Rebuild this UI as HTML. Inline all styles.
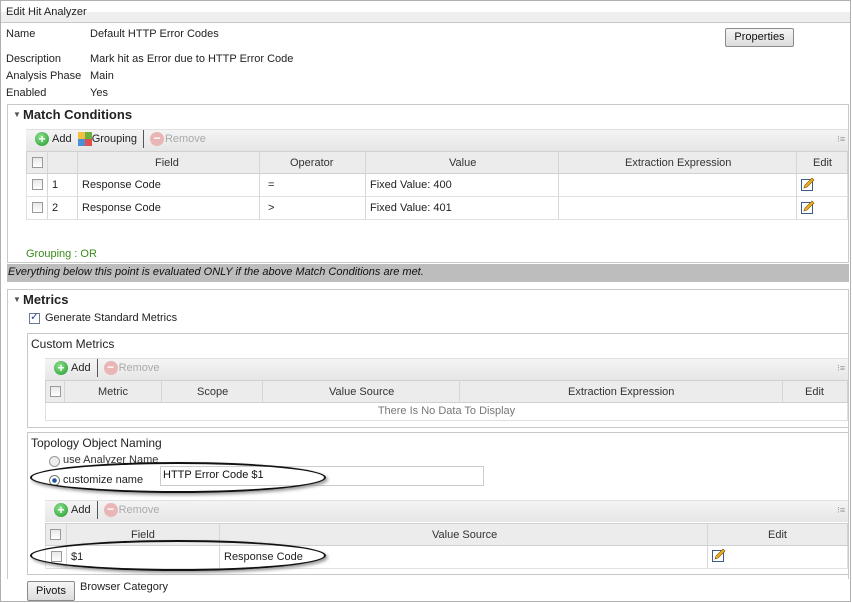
<!DOCTYPE html>
<html><head><meta charset="utf-8"><style>
*{box-sizing:border-box;margin:0;padding:0}
body{width:852px;height:603px;background:#fff;font-family:"Liberation Sans","DejaVu Sans",sans-serif;font-size:11px;color:#222;position:relative;overflow:hidden}
.a{position:absolute;white-space:nowrap}
.box{position:absolute;border:1px solid #c8c8c8;background:#fff}
.tb{position:absolute;background:linear-gradient(#f4f4f4,#e6e6e6);border-top:1px solid #e0e0e0}
.hd{position:absolute;background:#ececec;border:1px solid #d0d0d0;color:#333;text-align:center;line-height:21px}
.cell{position:absolute;border-left:1px solid #d6d6d6;height:100%;top:0}
.cb{position:absolute;width:11px;height:11px;border:1px solid #9a9a9a;background:linear-gradient(#e8e8e8,#fff)}
.tbi{display:flex;align-items:center;height:16px}
.plus{display:inline-block;width:14px;height:14px;border-radius:50%;background:radial-gradient(circle at 40% 35%,#8ee08e,#1f9a2a);color:#fff;font-size:12px;line-height:14px;text-align:center;font-weight:bold;margin-right:3px}
.minus{display:inline-block;width:14px;height:14px;border-radius:50%;background:#e9b5b5;color:#fff;font-size:12px;line-height:13px;text-align:center;font-weight:bold;margin-right:1px}
.btn{position:absolute;border:1px solid #8a8a8a;border-radius:2px;background:linear-gradient(#f6f6f6,#dcdcdc);text-align:center;color:#111}
.sep{display:inline-block;width:1px;height:18px;background:#555;margin:0 6px}
.row{position:absolute;background:#fff;border:1px solid #e0e0e0;border-top:none}
.pen{position:absolute;width:14px;height:14px}
</style></head><body>
<div class="a" style="left:0;top:0;width:851px;height:602px;border:1px solid #b0b0b0"></div>
<div class="a" style="left:1px;top:1px;width:849px;height:22px;background:linear-gradient(#fff 50%,#eeeeee 55%);border-bottom:1px solid #c8c8c8"></div>
<div class="a" style="left:6px;top:6px">Edit Hit Analyzer</div>
<div class="a" style="left:6px;top:28px">Name</div><div class="a" style="left:90px;top:28px">Default HTTP Error Codes</div>
<div class="a" style="left:6px;top:53px">Description</div><div class="a" style="left:90px;top:53px">Mark hit as Error due to HTTP Error Code</div>
<div class="a" style="left:6px;top:70px">Analysis Phase</div><div class="a" style="left:90px;top:70px">Main</div>
<div class="a" style="left:6px;top:87px">Enabled</div><div class="a" style="left:90px;top:87px">Yes</div>
<div class="btn" style="left:725px;top:28px;width:69px;height:19px;line-height:17px">Properties</div>

<div class="box" style="left:7px;top:104px;width:842px;height:159px"></div>
<div class="a" style="left:13px;top:110px;font-size:8px;color:#555">▼</div>
<div class="a" style="left:23px;top:107px;font-size:13px;font-weight:bold;color:#222">Match Conditions</div>
<div class="tb" style="left:26px;top:129px;width:822px;height:22px"></div>
<div class="a tbi" style="left:35px;top:131px"><span class="plus">+</span>Add&nbsp;&nbsp;<span style="display:inline-block;width:14px;height:14px;background:linear-gradient(90deg,#f0c040 50%,#6cb040 50%) top/100% 50% no-repeat,linear-gradient(90deg,#4a90d8 50%,#e05050 50%) bottom/100% 50% no-repeat"></span>Grouping<span class="sep"></span><span class="minus">−</span><span style="color:#aaa">Remove</span></div>
<div class="a" style="left:837px;top:134px;color:#999;font-size:9px">⁝≡</div>
<div class="hd" style="left:26px;top:151px;width:822px;height:23px">
<div class="cell" style="left:20px"></div><div class="cell" style="left:50px"></div><div class="cell" style="left:232px"></div><div class="cell" style="left:338px"></div><div class="cell" style="left:531px"></div><div class="cell" style="left:769px"></div>
<span class="a" style="left:128px;top:1px">Field</span><span class="a" style="left:263px;top:1px">Operator</span><span class="a" style="left:422px;top:1px">Value</span><span class="a" style="left:598px;top:1px">Extraction Expression</span><span class="a" style="left:786px;top:1px">Edit</span>
</div>
<div class="cb" style="left:32px;top:157px"></div>
<div class="row" style="left:26px;top:174px;width:822px;height:23px;line-height:22px">
<div class="cell" style="left:20px"></div><div class="cell" style="left:50px"></div><div class="cell" style="left:232px"></div><div class="cell" style="left:338px"></div><div class="cell" style="left:531px"></div><div class="cell" style="left:769px"></div>
<span class="a" style="left:25px">1</span><span class="a" style="left:55px">Response Code</span><span class="a" style="left:241px">=</span><span class="a" style="left:343px">Fixed Value: 400</span></div>
<div class="cb" style="left:32px;top:179px"></div>
<div class="row" style="left:26px;top:197px;width:822px;height:23px;line-height:22px">
<div class="cell" style="left:20px"></div><div class="cell" style="left:50px"></div><div class="cell" style="left:232px"></div><div class="cell" style="left:338px"></div><div class="cell" style="left:531px"></div><div class="cell" style="left:769px"></div>
<span class="a" style="left:25px">2</span><span class="a" style="left:55px">Response Code</span><span class="a" style="left:241px">&gt;</span><span class="a" style="left:343px">Fixed Value: 401</span></div>
<div class="cb" style="left:32px;top:202px"></div>
<svg class="pen" style="left:801px;top:177px" viewBox="0 0 14 14"><rect x="0.5" y="2.5" width="11" height="11" fill="#fff" stroke="#3a5a8a"/><path d="M3 11 L4 8 L11 1 L13 3 L6 10 Z" fill="#f0b020" stroke="#7a5000" stroke-width=".6"/></svg>
<svg class="pen" style="left:801px;top:200px" viewBox="0 0 14 14"><rect x="0.5" y="2.5" width="11" height="11" fill="#fff" stroke="#3a5a8a"/><path d="M3 11 L4 8 L11 1 L13 3 L6 10 Z" fill="#f0b020" stroke="#7a5000" stroke-width=".6"/></svg>
<div class="a" style="left:26px;top:248px;color:#3a8a1a">Grouping : OR</div>

<div class="a" style="left:7px;top:264px;width:842px;height:18px;background:#bdbdbd"></div>
<div class="a" style="left:8px;top:266px;font-style:italic;color:#111">Everything below this point is evaluated ONLY if the above Match Conditions are met.</div>

<div class="box" style="left:7px;top:289px;width:842px;height:290px;border-bottom:none"></div>
<div class="a" style="left:13px;top:295px;font-size:8px;color:#555">▼</div>
<div class="a" style="left:23px;top:292px;font-size:13px;font-weight:bold">Metrics</div>
<div class="cb" style="left:29px;top:313px;background:#fff;border-color:#6a7a9a"></div>
<div class="a" style="left:30px;top:310px;color:#2a4a9a;font-size:11px;font-weight:bold">✓</div>
<div class="a" style="left:45px;top:312px">Generate Standard Metrics</div>

<div class="box" style="left:27px;top:333px;width:822px;height:95px"></div>
<div class="a" style="left:31px;top:337px;font-size:12px">Custom Metrics</div>
<div class="tb" style="left:45px;top:358px;width:803px;height:22px"></div>
<div class="a tbi" style="left:54px;top:360px"><span class="plus">+</span>Add<span class="sep"></span><span class="minus">−</span><span style="color:#aaa">Remove</span></div>
<div class="a" style="left:837px;top:363px;color:#999;font-size:9px">⁝≡</div>
<div class="hd" style="left:45px;top:380px;width:803px;height:23px">
<div class="cell" style="left:18px"></div><div class="cell" style="left:115px"></div><div class="cell" style="left:216px"></div><div class="cell" style="left:413px"></div><div class="cell" style="left:736px"></div>
<span class="a" style="left:52px;top:1px">Metric</span><span class="a" style="left:151px;top:1px">Scope</span><span class="a" style="left:283px;top:1px">Value Source</span><span class="a" style="left:522px;top:1px">Extraction Expression</span><span class="a" style="left:759px;top:1px">Edit</span></div>
<div class="cb" style="left:50px;top:386px"></div>
<div class="row" style="left:45px;top:403px;width:803px;height:18px;color:#777;text-align:center;line-height:17px">There Is No Data To Display</div>

<div class="box" style="left:27px;top:432px;width:822px;height:143px"></div>
<div class="a" style="left:31px;top:436px;font-size:12px">Topology Object Naming</div>
<div class="a" style="left:49px;top:456px;width:11px;height:11px;border-radius:50%;border:1px solid #999;background:#eee"></div>
<div class="a" style="left:63px;top:454px;color:#333">use Analyzer Name</div>
<div class="a" style="left:49px;top:475px;width:11px;height:11px;border-radius:50%;border:1px solid #777;background:radial-gradient(#2050a0 30%,#fff 40%)"></div>
<div class="a" style="left:63px;top:474px">customize name</div>
<div class="a" style="left:160px;top:466px;width:324px;height:20px;border:1px solid #ccc;background:#fff;padding:2px 2px;color:#111">HTTP Error Code $1</div>
<div class="a" style="left:30px;top:462px;width:296px;height:31px;border:2px solid #111;border-radius:50%;box-shadow:2px 2px 3px #999"></div>

<div class="tb" style="left:45px;top:500px;width:803px;height:22px"></div>
<div class="a tbi" style="left:54px;top:502px"><span class="plus">+</span>Add<span class="sep"></span><span class="minus">−</span><span style="color:#aaa">Remove</span></div>
<div class="a" style="left:837px;top:505px;color:#999;font-size:9px">⁝≡</div>
<div class="hd" style="left:45px;top:523px;width:803px;height:23px">
<div class="cell" style="left:20px"></div><div class="cell" style="left:173px"></div><div class="cell" style="left:661px"></div>
<span class="a" style="left:85px;top:1px">Field</span><span class="a" style="left:386px;top:1px">Value Source</span><span class="a" style="left:722px;top:1px">Edit</span></div>
<div class="cb" style="left:50px;top:529px"></div>
<div class="row" style="left:45px;top:546px;width:803px;height:23px;line-height:22px">
<div class="cell" style="left:20px"></div><div class="cell" style="left:173px"></div><div class="cell" style="left:661px"></div>
<span class="a" style="left:25px">$1</span><span class="a" style="left:178px">Response Code</span></div>
<div class="cb" style="left:51px;top:551px"></div>
<svg class="pen" style="left:712px;top:548px" viewBox="0 0 14 14"><rect x="0.5" y="2.5" width="11" height="11" fill="#fff" stroke="#3a5a8a"/><path d="M3 11 L4 8 L11 1 L13 3 L6 10 Z" fill="#f0b020" stroke="#7a5000" stroke-width=".6"/></svg>
<div class="a" style="left:30px;top:540px;width:296px;height:31px;border:2px solid #111;border-radius:50%;box-shadow:2px 2px 3px #999"></div>

<div class="btn" style="left:27px;top:581px;width:48px;height:20px;line-height:19px">Pivots</div>
<div class="a" style="left:80px;top:581px">Browser Category</div>
</body></html>
